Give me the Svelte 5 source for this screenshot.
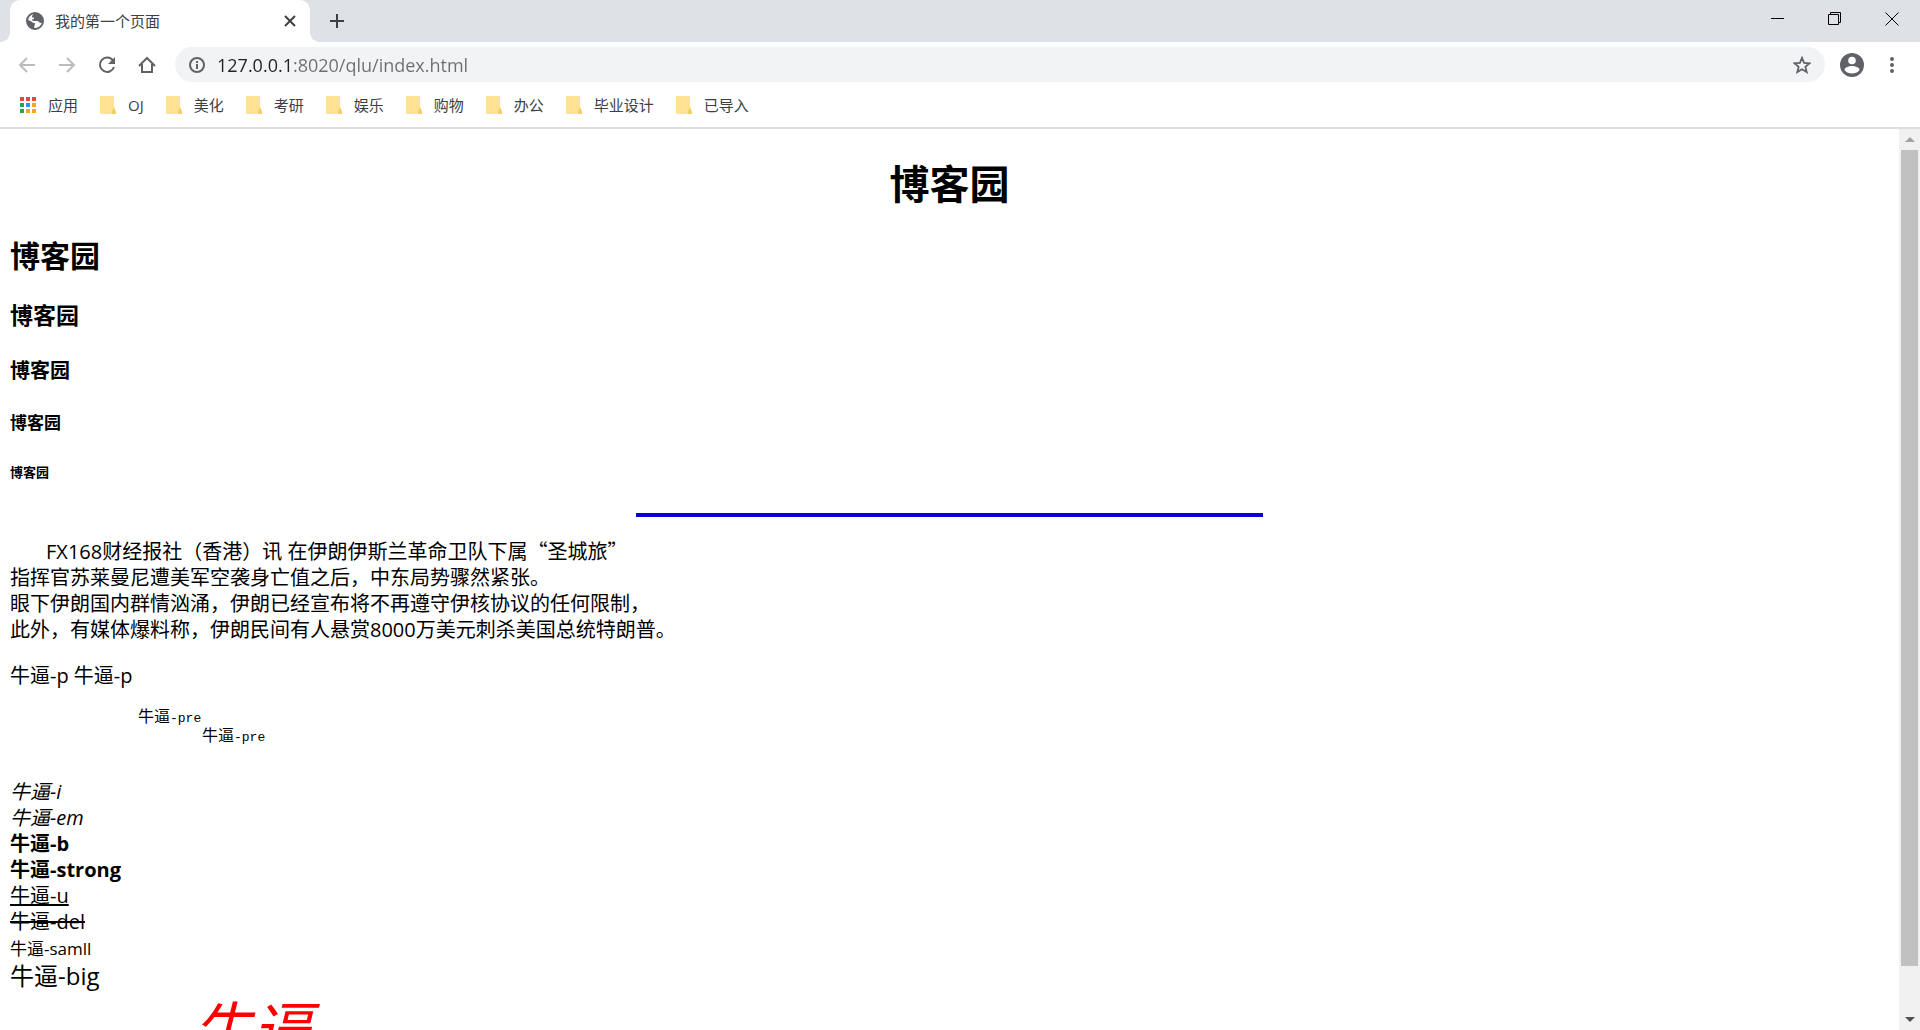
<script lang="ts">
  let address = '127.0.0.1:8020/qlu/index.html';

  const bookmarks = ['OJ', '美化', '考研', '娱乐', '购物', '办公', '毕业设计', '已导入'];

  const appColors = [
    '#e8453c', '#e8453c', '#e8453c',
    '#2ba24c', '#4285f4', '#f5a623',
    '#2ba24c', '#f5a623', '#f5a623'
  ];
</script>

<div class="browser">
  <header class="chrome">
    <div class="tabstrip">
      <div class="tab">
        <svg class="favicon" viewBox="0 0 18 18">
          <circle cx="9" cy="9" r="8" fill="#fff" stroke="#5f6368" stroke-width="2" />
          <path d="M1 8c2 0 4 1 5 2s2 1 3 1c0 2-1 3-1 6C4 17 1 13 1 8z" fill="#5f6368" />
          <path d="M8 1c-1 2-2 2-2 4 0 1 2 0 2 1 0 2-2 1-2 2s3 1 5 1c2 0 2 2 4 2 1 0 2-1 2-2 0-5-4-8-9-8z" fill="#5f6368" />
        </svg>
        <span class="tab-title">我的第一个页面</span>
        <button class="tab-close" aria-label="关闭标签页">
          <svg width="12" height="12" viewBox="0 0 12 12" stroke="#3c4043" stroke-width="2">
            <path d="M1 1l10 10M11 1L1 11" />
          </svg>
        </button>
      </div>
      <button class="new-tab" aria-label="新标签页">
        <svg width="16" height="16" viewBox="0 0 16 16" stroke="#3c4043" stroke-width="2">
          <path d="M8 1v14M1 8h14" />
        </svg>
      </button>
      <div class="window-controls">
        <button aria-label="最小化">
          <svg width="14" height="14" viewBox="0 0 14 14" stroke="#000"><path d="M0 6.5h13" /></svg>
        </button>
        <button aria-label="还原">
          <svg width="14" height="14" viewBox="0 0 14 14" fill="none" stroke="#000">
            <path d="M.5 2.5h10v10H.5zM2.5 2.5v-2h10v10h-2" />
          </svg>
        </button>
        <button aria-label="关闭">
          <svg width="14" height="14" viewBox="0 0 14 14" stroke="#000"><path d="M.5.5l13 13M13.5.5l-13 13" /></svg>
        </button>
      </div>
    </div>

    <div class="toolbar">
      <button class="nav" aria-label="后退">
        <svg width="18" height="18" viewBox="0 0 18 18" fill="none" stroke="#babcbe" stroke-width="2">
          <path d="M17 9H2M9 2L2 9l7 7" />
        </svg>
      </button>
      <button class="nav" aria-label="前进">
        <svg width="18" height="18" viewBox="0 0 18 18" fill="none" stroke="#babcbe" stroke-width="2">
          <path d="M1 9h15M9 2l7 7-7 7" />
        </svg>
      </button>
      <button class="nav" aria-label="重新加载">
        <svg width="18" height="18" viewBox="0 0 18 18" fill="none" stroke="#5f6368" stroke-width="2">
          <path d="M15 4.500A7.200 7.200 0 1 0 16 11" />
          <path d="M17 1v7h-7z" fill="#5f6368" stroke="none" />
        </svg>
      </button>
      <button class="nav" aria-label="主页">
        <svg width="18" height="18" viewBox="0 0 18 18" fill="none" stroke="#5f6368" stroke-width="2">
          <path d="M1 10l8-8 8 8M4 8v8h10V8" />
        </svg>
      </button>

      <div class="omnibox">
        <svg width="16" height="16" viewBox="0 0 16 16" fill="none" stroke="#5f6368" stroke-width="2">
          <circle cx="8" cy="8" r="7" />
          <path d="M8 7v5M8 4v2" />
        </svg>
        <input type="text" aria-label="地址栏" spellcheck="false" bind:value={address} />
        <button class="star" aria-label="为此页添加书签">
          <svg width="18" height="18" viewBox="0 0 18 18" fill="none" stroke="#5f6368" stroke-width="1.800">
            <path d="M9 1.800l2.100 5 5.400.5-4.100 3.500 1.300 5.300L9 13.300l-4.700 2.800 1.300-5.300L1.500 7.300l5.400-.5z" />
          </svg>
        </button>
      </div>

      <button class="profile" aria-label="用户">
        <svg width="24" height="24" viewBox="0 0 24 24">
          <circle cx="12" cy="12" r="12" fill="#5f6368" />
          <circle cx="12" cy="7.500" r="3.800" fill="#fff" />
          <path d="M4.500 17c0-3 5-4 7.500-4s7.500 1 7.500 4c-2 2.600-4.500 3.500-7.500 3.500S6.500 19.600 4.500 17z" fill="#fff" />
        </svg>
      </button>
      <button class="menu" aria-label="菜单">
        <svg width="4" height="16" viewBox="0 0 4 16" fill="#5f6368">
          <circle cx="2" cy="2" r="2" />
          <circle cx="2" cy="8" r="2" />
          <circle cx="2" cy="14" r="2" />
        </svg>
      </button>
    </div>

    <nav class="bookmarks">
      <a href="#apps">
        <svg width="16" height="16" viewBox="0 0 16 16">
          {#each appColors as color, i}
            <rect x={(i % 3) * 6} y={Math.floor(i / 3) * 6} width="4" height="4" fill={color} />
          {/each}
        </svg>
        应用
      </a>
      {#each bookmarks as name}
        <a href="#{name}">
          <svg width="16" height="18" viewBox="0 0 16 18">
            <path d="M1 0h13v11l2 5v2H1a1 1 0 0 1-1-1V1a1 1 0 0 1 1-1z" fill="#ffe293" />
            <path d="M14 11l2 5v2h-4v-3z" fill="#f3cf62" />
          </svg>
          {name}
        </a>
      {/each}
    </nav>
  </header>

  <div class="viewport">
    <main>
      <h1>博客园</h1>
      <h2>博客园</h2>
      <h3>博客园</h3>
      <h4>博客园</h4>
      <h5>博客园</h5>
      <h6>博客园</h6>
      <hr />
      <p class="news">
        FX168财经报社（香港）讯 在伊朗伊斯兰革命卫队下属<span class="quote">“圣城旅”</span><br />
        指挥官苏莱曼尼遭美军空袭身亡值之后，中东局势骤然紧张。<br />
        眼下伊朗国内群情汹涌，伊朗已经宣布将不再遵守伊核协议的任何限制，<br />
        此外，有媒体爆料称，伊朗民间有人悬赏8000万美元刺杀美国总统特朗普。
      </p>
      <p>牛逼-p 牛逼-p</p>
      <pre>{'\t\t'}牛逼<span>-pre</span>{'\n\t\t\t'}牛逼<span>-pre</span>{'\n\n'}</pre>
      <div><i>牛逼-i</i></div>
      <div><em>牛逼-em</em></div>
      <div><b>牛逼-b</b></div>
      <div><strong>牛逼-strong</strong></div>
      <div><u>牛逼-u</u></div>
      <div><del>牛逼-del</del></div>
      <div><small>牛逼-samll</small></div>
      <div class="big">牛逼-big</div>
      <div class="banner"><i>牛逼</i></div>
    </main>

    <div class="scrollbar">
      <button aria-label="向上滚动">
        <svg width="10" height="6" viewBox="0 0 10 6" fill="#a3a3a3"><path d="M0 5l5-5 5 5z" /></svg>
      </button>
      <div class="track"><div class="thumb"></div></div>
      <button aria-label="向下滚动">
        <svg width="10" height="6" viewBox="0 0 10 6" fill="#505050"><path d="M0 0h10L5 5z" /></svg>
      </button>
    </div>
  </div>
</div>

<style>
  .browser {
    display: flex;
    flex-direction: column;
    height: 100vh;
    overflow: hidden;
    background: #fff;
    color: #000;
    font-family: 'Open Sans', 'Noto Sans CJK SC', sans-serif;
  }

  button {
    display: flex;
    align-items: center;
    justify-content: center;
    padding: 0;
    border: 0;
    background: none;
  }

  svg {
    display: block;
    flex: none;
  }

  .chrome {
    flex: none;
    border-bottom: 2px solid #dcdee1;
  }

  .tabstrip {
    display: flex;
    height: 42px;
    padding-left: 10px;
    background: #dee1e6;
  }

  .tab {
    position: relative;
    display: flex;
    align-items: center;
    box-sizing: border-box;
    width: 300px;
    height: 42px;
    padding: 0 8px 1px 16px;
    border-radius: 10px 10px 0 0;
    background: #fff;
  }

  .tab::before,
  .tab::after {
    content: '';
    position: absolute;
    bottom: 0;
    width: 10px;
    height: 10px;
  }

  .tab::before {
    right: 100%;
    background: radial-gradient(circle at 0 0, transparent 10px, #fff 10px);
  }

  .tab::after {
    left: 100%;
    background: radial-gradient(circle at 100% 0, transparent 10px, #fff 10px);
  }

  .favicon {
    width: 18px;
    height: 18px;
  }

  .tab-title {
    flex: 1;
    margin-left: 11px;
    color: #3c4043;
    font-size: 15px;
  }

  .tab-close {
    width: 24px;
    height: 24px;
  }

  .new-tab {
    width: 34px;
    height: 42px;
    margin-left: 10px;
  }

  .window-controls {
    display: flex;
    margin-left: auto;
  }

  .window-controls button {
    width: 57px;
    height: 37px;
  }

  .toolbar {
    display: flex;
    align-items: center;
    height: 45px;
    padding: 0 14px 0 7px;
  }

  .nav {
    width: 40px;
    height: 36px;
  }

  .omnibox {
    display: flex;
    flex: 1;
    align-items: center;
    box-sizing: border-box;
    height: 35px;
    margin-left: 8px;
    padding: 0 14px;
    border-radius: 18px;
    background: #f1f3f4;
  }

  .omnibox input {
    flex: 1;
    min-width: 0;
    margin: 0 12px;
    padding: 0;
    border: 0;
    outline: 0;
    background: linear-gradient(90deg, #202124 75px, #6b6f73 75px);
    background-clip: text;
    -webkit-text-fill-color: transparent;
    font-family: inherit;
    font-size: 18px;
  }

  .profile {
    width: 24px;
    height: 24px;
    margin-left: 15px;
  }

  .menu {
    width: 28px;
    height: 36px;
    margin-left: 14px;
  }

  .bookmarks {
    display: flex;
    align-items: center;
    box-sizing: border-box;
    gap: 22px;
    height: 40px;
    padding: 0 20px 5px;
  }

  .bookmarks a {
    display: flex;
    align-items: center;
    gap: 12px;
    color: #3c4043;
    font-size: 15px;
    line-height: 18px;
    text-decoration: none;
    white-space: nowrap;
  }

  .viewport {
    display: flex;
    flex: 1;
    min-height: 0;
  }

  main {
    flex: 1;
    padding: 0 10px;
    overflow: hidden;
    font-size: 20px;
    line-height: 26px;
  }

  h1 {
    margin: 28px 0 25px;
    font-size: 40px;
    line-height: 54px;
    text-align: center;
  }

  h2 {
    margin: 25px 0 23px;
    font-size: 30px;
    line-height: 40px;
  }

  h3 {
    margin: 23px 0 25px;
    font-size: 23px;
    line-height: 32px;
  }

  h4 {
    margin: 27px 0;
    font-size: 20px;
    line-height: 26px;
  }

  h5 {
    margin: 28px 0;
    font-size: 17px;
    line-height: 22px;
  }

  h6 {
    margin: 29px 0;
    font-size: 13px;
    line-height: 18px;
  }

  hr {
    width: calc((100% + 4px) / 3);
    height: 4px;
    margin: 32px auto 21px;
    border: 0;
    background: #0b00d0;
  }

  p {
    margin: 20px 0;
  }

  .news {
    text-indent: 36px;
  }

  /* full-width Chinese quotation marks */
  .quote {
    font-family: 'Noto Sans CJK SC', sans-serif;
  }

  pre {
    margin: 20px 0 14px;
    font-family: 'Liberation Mono', 'Noto Sans CJK SC', monospace;
    font-size: 16px;
    line-height: 18px;
    tab-size: 64px;
  }

  pre span {
    font-size: 13px;
  }

  small {
    font-size: 17px;
  }

  .big {
    font-size: 24px;
    line-height: 28px;
  }

  .banner {
    padding-left: 182px;
    color: #f00;
    font-size: 60px;
    line-height: 78px;
  }

  .scrollbar {
    display: flex;
    flex: none;
    flex-direction: column;
    width: 21px;
    background: #f1f1f1;
  }

  .scrollbar button {
    height: 21px;
  }

  .track {
    flex: 1;
    padding: 0 2px;
  }

  .thumb {
    height: 95%;
    background: #c1c1c1;
  }
</style>
